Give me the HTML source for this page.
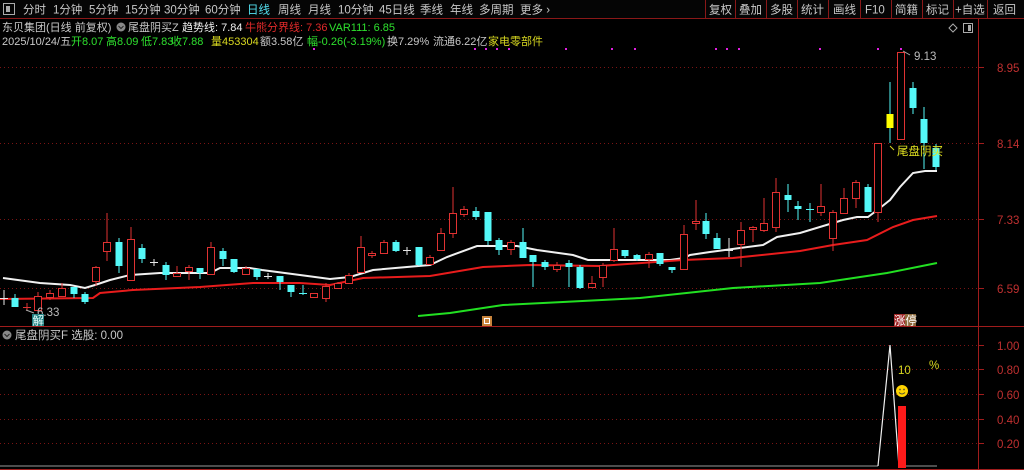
<!DOCTYPE html>
<html><head><meta charset="utf-8"><style>
html,body{margin:0;padding:0;background:#000;width:1024px;height:470px;overflow:hidden}
svg{display:block}
text{font-family:"Liberation Sans","Noto Sans CJK SC",sans-serif;font-size:11.5px}
text.h{font-size:11px}
.r line{stroke:#e03232;stroke-width:1}
.r rect{fill:#000;stroke:#e03232;stroke-width:1}
.c line{stroke:#54f8f8;stroke-width:1}
.c rect{fill:#54f8f8}
.grid{stroke:#7a1414;stroke-dasharray:1 3;stroke-width:1}
</style></head><body>
<svg width="1024" height="470" viewBox="0 0 1024 470" xmlns="http://www.w3.org/2000/svg">
<rect width="1024" height="470" fill="#000"/>
<rect x="0" y="0" width="1024" height="18" fill="#050505"/>
<line x1="0" y1="18.5" x2="1024" y2="18.5" stroke="#8a1818"/>
<rect x="3.5" y="3.5" width="11" height="11" fill="none" stroke="#aaa"/><rect x="6" y="6" width="4" height="6" fill="#aaa"/>
<g fill="#c8c8c8">
<text x="23" y="13.5">分时</text><text x="53" y="13.5">1分钟</text><text x="89" y="13.5">5分钟</text><text x="125" y="13.5">15分钟</text><text x="164" y="13.5">30分钟</text><text x="205" y="13.5">60分钟</text>
<text x="247" y="13.5" fill="#54e0f0">日线</text><text x="278" y="13.5">周线</text><text x="308" y="13.5">月线</text><text x="338" y="13.5">10分钟</text><text x="379" y="13.5">45日线</text><text x="420" y="13.5">季线</text><text x="450" y="13.5">年线</text><text x="479" y="13.5">多周期</text><text x="520" y="13.5">更多 ›</text>
</g>
<g stroke="#8a1818"><line x1="705.5" y1="0" x2="705.5" y2="18"/><line x1="735.5" y1="0" x2="735.5" y2="18"/><line x1="766.5" y1="0" x2="766.5" y2="18"/><line x1="797.5" y1="0" x2="797.5" y2="18"/><line x1="828.5" y1="0" x2="828.5" y2="18"/><line x1="860.5" y1="0" x2="860.5" y2="18"/><line x1="891.5" y1="0" x2="891.5" y2="18"/><line x1="922.5" y1="0" x2="922.5" y2="18"/><line x1="953.5" y1="0" x2="953.5" y2="18"/><line x1="987.5" y1="0" x2="987.5" y2="18"/></g>
<g fill="#c8c8c8"><text x="709" y="13.5">复权</text><text x="739" y="13.5">叠加</text><text x="770" y="13.5">多股</text><text x="801" y="13.5">统计</text><text x="833" y="13.5">画线</text><text x="865" y="13.5">F10</text><text x="895" y="13.5">简籍</text><text x="926" y="13.5">标记</text><text x="955" y="13.5">+自选</text><text x="993" y="13.5">返回</text></g>
<line x1="978.5" y1="19" x2="978.5" y2="470" stroke="#a01c1c"/>
<line x1="0" y1="326.5" x2="1024" y2="326.5" stroke="#a01c1c"/>
<line x1="0" y1="469.5" x2="1024" y2="469.5" stroke="#a01c1c"/>
<text class="h" x="2" y="31" fill="#c8c8c8">东贝集团(日线 前复权)</text>
<circle cx="121" cy="27" r="4.5" fill="#888"/><path d="M118.5 26 l2.5 2.5 l2.5 -2.5" stroke="#222" fill="none"/>
<text class="h" x="128" y="31" fill="#c8c8c8">尾盘阴买Z</text>
<text class="h" x="182" y="31" fill="#f0f0f0">趋势线: 7.84</text>
<text class="h" x="245" y="31" fill="#e02a2a">牛熊分界线: 7.36</text>
<text class="h" x="329" y="31" fill="#2ee02e">VAR111: 6.85</text>
<text class="h" x="2" y="45" fill="#c8c8c8">2025/10/24/五</text>
<text class="h" x="71" y="45" fill="#2ee02e">开8.07</text><text class="h" x="106" y="45" fill="#2ee02e">高8.09</text><text class="h" x="141" y="45" fill="#2ee02e">低7.83</text><text class="h" x="171" y="45" fill="#2ee02e">收7.88</text>
<text class="h" x="211" y="45" fill="#d8d820">量453304</text><text class="h" x="260" y="45" fill="#c8c8c8">额3.58亿</text>
<text class="h" x="307" y="45" fill="#2ee02e">幅-0.26(-3.19%)</text><text class="h" x="387" y="45" fill="#c8c8c8">换7.29%</text><text class="h" x="433" y="45" fill="#c8c8c8">流通6.22亿</text><text class="h" x="488" y="45" fill="#d8d820">家电零部件</text>
<path d="M953 24 l4 4 l-4 4 l-4 -4z" fill="none" stroke="#aaa"/><rect x="963.5" y="23.5" width="9" height="9" fill="none" stroke="#aaa"/><rect x="968" y="25" width="3" height="6" fill="#aaa"/>
<g class="grid"><line x1="0" y1="67.5" x2="978" y2="67.5"/><line x1="0" y1="143.5" x2="978" y2="143.5"/><line x1="0" y1="219.5" x2="978" y2="219.5"/><line x1="0" y1="288.5" x2="978" y2="288.5"/>
<line x1="0" y1="345.5" x2="978" y2="345.5"/><line x1="0" y1="369.5" x2="978" y2="369.5"/><line x1="0" y1="394.5" x2="978" y2="394.5"/><line x1="0" y1="419.5" x2="978" y2="419.5"/><line x1="0" y1="443.5" x2="978" y2="443.5"/></g>
<g stroke="#a01c1c"><line x1="978" y1="67.5" x2="984" y2="67.5"/><line x1="978" y1="143.5" x2="984" y2="143.5"/><line x1="978" y1="219.5" x2="984" y2="219.5"/><line x1="978" y1="288.5" x2="984" y2="288.5"/><line x1="978" y1="345.5" x2="984" y2="345.5"/><line x1="978" y1="369.5" x2="984" y2="369.5"/><line x1="978" y1="394.5" x2="984" y2="394.5"/><line x1="978" y1="419.5" x2="984" y2="419.5"/><line x1="978" y1="443.5" x2="984" y2="443.5"/></g>
<g fill="#c03030"><text x="997" y="72">8.95</text><text x="997" y="148">8.14</text><text x="997" y="224">7.33</text><text x="997" y="293">6.59</text>
<text x="997" y="350">1.00</text><text x="997" y="374">0.80</text><text x="997" y="399">0.60</text><text x="997" y="424">0.40</text><text x="997" y="448">0.20</text></g>
<g fill="#e020e0"><rect x="313" y="48" width="2" height="2"/><rect x="474" y="48" width="2" height="2"/><rect x="485" y="48" width="2" height="2"/><rect x="496" y="48" width="2" height="2"/><rect x="508" y="48" width="2" height="2"/><rect x="565" y="48" width="2" height="2"/><rect x="611" y="48" width="2" height="2"/><rect x="634" y="48" width="2" height="2"/><rect x="715" y="48" width="2" height="2"/><rect x="726" y="48" width="2" height="2"/><rect x="738" y="48" width="2" height="2"/><rect x="819" y="48" width="2" height="2"/><rect x="877" y="48" width="2" height="2"/><rect x="900" y="48" width="2" height="2"/></g>
<polyline fill="none" stroke="#f0f0f0" stroke-width="2" points="3,278 40,283 70,285 85,288 95,285 110,280 130,275 160,273 210,273 220,268 250,268 262,270 300,275 330,279 350,277 373,270 430,265 447,257 477,246 517,246 537,250 573,255 588,260 670,260 684,258 690,255 710,252 740,248 763,245 777,237 800,233 843,220 857,217 868,217 880,208 890,200 900,187 913,173 925,171 937,171"/>
<polyline fill="none" stroke="#e81c1c" stroke-width="2" points="0,299 93,298 100,293 133,290 200,287 253,283 300,283 330,285 363,278 430,276 483,267 530,265 600,266 683,260 733,258 800,251 833,245 867,240 893,227 913,220 937,216"/>
<polyline fill="none" stroke="#22e022" stroke-width="2" points="418,316 450,313 503,305 563,302 640,298 733,288 820,283 887,273 937,263"/>
<g class="r">
<line x1="38" y1="292" x2="38" y2="311"/><rect x="34.5" y="296.5" width="7" height="14"/>
<line x1="50" y1="290" x2="50" y2="300"/><rect x="46.5" y="293.5" width="7" height="4"/>
<line x1="62" y1="283" x2="62" y2="296"/><rect x="58.5" y="288.5" width="7" height="8"/>
<line x1="96" y1="266" x2="96" y2="286"/><rect x="92.5" y="267.5" width="7" height="14"/>
<line x1="107" y1="213" x2="107" y2="261"/><rect x="103.5" y="242.5" width="7" height="9"/>
<line x1="131" y1="227" x2="131" y2="280"/><rect x="127.5" y="239.5" width="7" height="41"/>
<line x1="177" y1="266" x2="177" y2="277"/><rect x="173.5" y="273.5" width="7" height="3"/>
<line x1="189" y1="265" x2="189" y2="280"/><rect x="185.5" y="267.5" width="7" height="4"/>
<line x1="211" y1="242" x2="211" y2="274"/><rect x="207.5" y="247.5" width="7" height="27"/>
<line x1="246" y1="266" x2="246" y2="274"/><rect x="242.5" y="268.5" width="7" height="6"/>
<line x1="314" y1="293" x2="314" y2="298"/><rect x="310.5" y="293.5" width="7" height="4"/>
<line x1="326" y1="283" x2="326" y2="302"/><rect x="322.5" y="286.5" width="7" height="12"/>
<line x1="338" y1="282" x2="338" y2="289"/><rect x="334.5" y="283.5" width="7" height="5"/>
<line x1="349" y1="273" x2="349" y2="284"/><rect x="345.5" y="275.5" width="7" height="8"/>
<line x1="361" y1="236" x2="361" y2="272"/><rect x="357.5" y="247.5" width="7" height="25"/>
<line x1="372" y1="251" x2="372" y2="258"/><rect x="368.5" y="253.5" width="7" height="2"/>
<line x1="384" y1="240" x2="384" y2="253"/><rect x="380.5" y="242.5" width="7" height="11"/>
<line x1="430" y1="255" x2="430" y2="264"/><rect x="426.5" y="257.5" width="7" height="7"/>
<line x1="441" y1="228" x2="441" y2="250"/><rect x="437.5" y="233.5" width="7" height="17"/>
<line x1="453" y1="187" x2="453" y2="238"/><rect x="449.5" y="213.5" width="7" height="20"/>
<line x1="464" y1="206" x2="464" y2="217"/><rect x="460.5" y="209.5" width="7" height="5"/>
<line x1="511" y1="240" x2="511" y2="255"/><rect x="507.5" y="242.5" width="7" height="7"/>
<line x1="557" y1="262" x2="557" y2="272"/><rect x="553.5" y="265.5" width="7" height="4"/>
<line x1="592" y1="276" x2="592" y2="288"/><rect x="588.5" y="283.5" width="7" height="4"/>
<line x1="603" y1="263" x2="603" y2="287"/><rect x="599.5" y="265.5" width="7" height="12"/>
<line x1="614" y1="228" x2="614" y2="262"/><rect x="610.5" y="249.5" width="7" height="11"/>
<line x1="649" y1="252" x2="649" y2="268"/><rect x="645.5" y="254.5" width="7" height="5"/>
<line x1="684" y1="225" x2="684" y2="270"/><rect x="680.5" y="234.5" width="7" height="35"/>
<line x1="696" y1="200" x2="696" y2="230"/><rect x="692.5" y="221.5" width="7" height="2"/>
<line x1="741" y1="222" x2="741" y2="267"/><rect x="737.5" y="230.5" width="7" height="14"/>
<line x1="753" y1="226" x2="753" y2="242"/><rect x="749.5" y="227.5" width="7" height="2"/>
<line x1="764" y1="198" x2="764" y2="232"/><rect x="760.5" y="223.5" width="7" height="7"/>
<line x1="776" y1="178" x2="776" y2="232"/><rect x="772.5" y="192.5" width="7" height="35"/>
<line x1="821" y1="184" x2="821" y2="216"/><rect x="817.5" y="206.5" width="7" height="6"/>
<line x1="833" y1="210" x2="833" y2="251"/><rect x="829.5" y="212.5" width="7" height="26"/>
<line x1="844" y1="188" x2="844" y2="213"/><rect x="840.5" y="198.5" width="7" height="15"/>
<line x1="856" y1="180" x2="856" y2="208"/><rect x="852.5" y="182.5" width="7" height="16"/>
<line x1="878" y1="143" x2="878" y2="222"/><rect x="874.5" y="143.5" width="7" height="69"/>
<line x1="901" y1="52" x2="901" y2="140"/><rect x="897.5" y="52.5" width="7" height="87"/>
<line x1="27" y1="303" x2="27" y2="311" /><line x1="23" y1="307.5" x2="31" y2="307.5"/>
</g>
<g class="c">
<line x1="15" y1="294" x2="15" y2="307"/><rect x="11.5" y="298" width="7" height="9"/>
<line x1="74" y1="287" x2="74" y2="298"/><rect x="70.5" y="287" width="7" height="7"/>
<line x1="85" y1="292" x2="85" y2="304"/><rect x="81.5" y="294" width="7" height="8"/>
<line x1="119" y1="238" x2="119" y2="273"/><rect x="115.5" y="242" width="7" height="24"/>
<line x1="142" y1="244" x2="142" y2="263"/><rect x="138.5" y="248" width="7" height="11"/>
<line x1="166" y1="262" x2="166" y2="280"/><rect x="162.5" y="265" width="7" height="10"/>
<line x1="200" y1="268" x2="200" y2="279"/><rect x="196.5" y="268" width="7" height="5"/>
<line x1="223" y1="248" x2="223" y2="266"/><rect x="219.5" y="251" width="7" height="8"/>
<line x1="234" y1="259" x2="234" y2="273"/><rect x="230.5" y="259" width="7" height="13"/>
<line x1="257" y1="269" x2="257" y2="280"/><rect x="253.5" y="269" width="7" height="8"/>
<line x1="280" y1="276" x2="280" y2="290"/><rect x="276.5" y="276" width="7" height="6"/>
<line x1="291" y1="285" x2="291" y2="297"/><rect x="287.5" y="285" width="7" height="7"/>
<line x1="396" y1="240" x2="396" y2="252"/><rect x="392.5" y="242" width="7" height="9"/>
<line x1="419" y1="247" x2="419" y2="266"/><rect x="415.5" y="247" width="7" height="18"/>
<line x1="476" y1="207" x2="476" y2="220"/><rect x="472.5" y="211" width="7" height="6"/>
<line x1="488" y1="212" x2="488" y2="245"/><rect x="484.5" y="212" width="7" height="29"/>
<line x1="499" y1="238" x2="499" y2="255"/><rect x="495.5" y="240" width="7" height="10"/>
<line x1="523" y1="228" x2="523" y2="258"/><rect x="519.5" y="242" width="7" height="16"/>
<line x1="533" y1="255" x2="533" y2="287"/><rect x="529.5" y="255" width="7" height="7"/>
<line x1="545" y1="260" x2="545" y2="270"/><rect x="541.5" y="262" width="7" height="5"/>
<line x1="569" y1="260" x2="569" y2="287"/><rect x="565.5" y="263" width="7" height="4"/>
<line x1="580" y1="265" x2="580" y2="289"/><rect x="576.5" y="267" width="7" height="21"/>
<line x1="625" y1="250" x2="625" y2="258"/><rect x="621.5" y="250" width="7" height="6"/>
<line x1="637" y1="254" x2="637" y2="261"/><rect x="633.5" y="255" width="7" height="4"/>
<line x1="660" y1="253" x2="660" y2="266"/><rect x="656.5" y="253" width="7" height="11"/>
<line x1="672" y1="267" x2="672" y2="273"/><rect x="668.5" y="267" width="7" height="3"/>
<line x1="706" y1="213" x2="706" y2="239"/><rect x="702.5" y="221" width="7" height="13"/>
<line x1="717" y1="233" x2="717" y2="249"/><rect x="713.5" y="238" width="7" height="11"/>
<line x1="788" y1="184" x2="788" y2="212"/><rect x="784.5" y="195" width="7" height="5"/>
<line x1="798" y1="201" x2="798" y2="220"/><rect x="794.5" y="206" width="7" height="3"/>
<line x1="868" y1="184" x2="868" y2="212"/><rect x="864.5" y="187" width="7" height="25"/>
<line x1="913" y1="82" x2="913" y2="114"/><rect x="909.5" y="88" width="7" height="20"/>
<line x1="924" y1="107" x2="924" y2="169"/><rect x="920.5" y="119" width="7" height="24"/>
<line x1="936" y1="144" x2="936" y2="170"/><rect x="932.5" y="148" width="7" height="19"/>
<line x1="303" y1="285" x2="303" y2="295"/><line x1="299" y1="293.5" x2="307" y2="293.5"/>
<line x1="810" y1="203" x2="810" y2="222"/><line x1="806" y1="209.5" x2="814" y2="209.5"/>
</g>
<g stroke="#e8e8e8">
<line x1="4" y1="290" x2="4" y2="305"/><line x1="0" y1="298.5" x2="8" y2="298.5"/>
<line x1="154" y1="259" x2="154" y2="266"/><line x1="150" y1="262.5" x2="158" y2="262.5"/>
<line x1="268" y1="273" x2="268" y2="279"/><line x1="264" y1="276.5" x2="272" y2="276.5"/>
<line x1="407" y1="247" x2="407" y2="255"/><line x1="403" y1="250.5" x2="411" y2="250.5"/>
<line x1="729" y1="238" x2="729" y2="257"/><line x1="725" y1="250.5" x2="733" y2="250.5"/>
</g>
<line x1="890" y1="82" x2="890" y2="143" stroke="#54f8f8"/>
<rect x="886.5" y="114" width="7" height="14" fill="#ffff00"/>
<path d="M903 51 L910 55" stroke="#aaa"/><text x="914" y="60" fill="#bbb">9.13</text>
<path d="M890 146 l4 4" stroke="#d8d820"/><text x="897" y="155" fill="#e0e020" font-size="12">尾盘阴买</text>
<path d="M26 310 l8 3" stroke="#aaa"/><text x="37" y="316" fill="#bbb">6.33</text>
<rect x="32" y="314" width="12" height="12" fill="#208080"/><text x="32.5" y="324.5" fill="#e8ffff" font-size="11">解</text>
<rect x="482" y="316" width="10" height="10" fill="#c8843c"/><rect x="484.5" y="318.5" width="5" height="5" fill="none" stroke="#fff"/>
<rect x="894" y="314" width="11" height="12" fill="#a02828"/><rect x="905" y="314" width="11" height="12" fill="#8c6a3c"/><text x="894" y="324.5" fill="#fff" font-size="11">涨停</text>
<circle cx="7" cy="335" r="4.5" fill="#888"/><path d="M4.5 334 l2.5 2.5 l2.5 -2.5" stroke="#222" fill="none"/>
<text x="15" y="339" fill="#c8c8c8">尾盘阴买F  选股: 0.00</text>
<line x1="0" y1="466" x2="878" y2="466" stroke="#999"/>
<line x1="898" y1="466" x2="937" y2="466" stroke="#999"/>
<polyline points="878,466 890,345 899,467" fill="none" stroke="#f0f0f0" stroke-width="1.2"/>
<rect x="898" y="406" width="8" height="62" fill="#ff1a1a"/>
<text x="898" y="374" fill="#d8d820">10</text><text x="929" y="369" fill="#d8d820">%</text>
<circle cx="902" cy="391" r="6" fill="#ffd400"/><circle cx="900" cy="389.5" r="0.9" fill="#553"/><circle cx="904" cy="389.5" r="0.9" fill="#553"/><path d="M899 392.5 q3 3 6 0" stroke="#553" fill="none"/>
</svg>
</body></html>
